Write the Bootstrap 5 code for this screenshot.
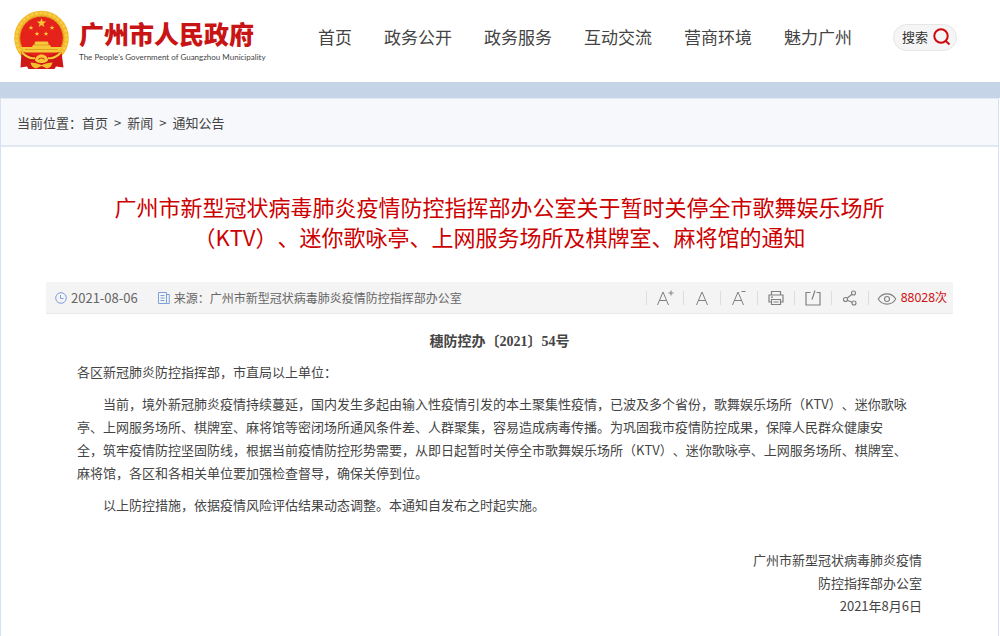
<!DOCTYPE html>
<html lang="zh-CN">
<head>
<meta charset="utf-8">
<meta name="viewport" content="width=device-width, initial-scale=1">
<title>广州市人民政府 - 通知公告</title>
<link href="https://cdn.jsdelivr.net/npm/bootstrap@5.3.0/dist/css/bootstrap.min.css" rel="stylesheet">
<style>
body{font-family:"Noto Sans CJK SC",sans-serif;font-size:13px;line-height:24px;color:#444;background:#fff;font-kerning:none;text-spacing-trim:space-all}
a{color:inherit;text-decoration:none}
a:hover{color:#c00}
.site-head{min-height:82px;padding:0 43px 8px 13px}
.site-name{font-size:25px;line-height:32px;font-weight:900;color:#c81414}
.site-sub{font:8px/12px Lato,sans-serif;color:#444;margin-top:2px}
.brand-link{width:305px;padding-top:6px}
.main-nav{gap:0 32px;font-size:17px;color:#444}
.main-nav .nav-link{padding:0;color:#444}
.search-btn{font-size:13px;line-height:20px;padding:2px 5px 3px 8px;background:#f5f5f5;border:1px solid #e6e6e6;color:#333;gap:5px}
.page-frame{border-top:16px solid #c6d4e8}
.page-body{border:1px solid #d5e1f1;border-top-color:#dfe8f3;border-bottom:0;margin-right:1px}
.crumb-bar{background:#f6f8fb;border-bottom:2px solid #e0e8f2;padding:12px 16px 10px}
.crumb-bar .breadcrumb{--bs-breadcrumb-divider:">";--bs-breadcrumb-item-padding-x:6px;--bs-breadcrumb-divider-color:#444;--bs-breadcrumb-margin-bottom:0;--bs-breadcrumb-font-size:13px}
.crumb-bar .active{color:#444}
.notice{padding:44px 45px 19px}
.notice h1{font-size:22px;line-height:30px;font-weight:400;color:#c00;margin-bottom:31px}
.info-bar{background:#f4f4f4;border-bottom:1px solid #e9e9e9;height:32px;padding:0 6px 0 9px;color:#666;font-size:12px}
.info-bar time{font-size:13px}
.tool{width:37px;height:14px;border:0;border-left:1px solid #ddd;background:none;padding:0;color:#808080}
.tool svg{display:block;margin:-1px auto 0}
.views{color:#d01010;font-family:"Noto Sans","Noto Sans CJK SC",sans-serif}
.notice-text{padding:0 31px;line-height:23px;color:#444}
.notice-text p{margin-bottom:9px}
.notice-text .long-text{text-indent:2em;padding-right:15px}
.notice-text .doc-no{font:bold 14px/23px "Liberation Serif","Noto Sans CJK SC",serif;margin-bottom:7px}
.sign-off{margin-top:32px}
</style>
</head>
<body>
<header class="site-head d-flex flex-wrap align-items-center">
  <a href="#" class="brand-link d-flex align-items-center">
    <svg width="58" height="60" viewBox="13 11 58 60" role="img" aria-label="国徽">
      <circle cx="41.5" cy="39" r="27.3" fill="#f1b92b"/>
      <circle cx="41.5" cy="39" r="25" fill="none" stroke="#f8cf45" stroke-width="2.4" stroke-dasharray="3 1.6"/>
      <circle cx="41.5" cy="39" r="21.8" fill="#e6231b" stroke="#d99b1e"/>
      <g fill="#f6c93a">
        <path d="M41.5 19.2l1.2 3.4h3.5l-2.8 2.1 1 3.4-2.9-2-2.9 2 1-3.4-2.8-2.1h3.5z"/>
        <path d="M31 26.2l.6 1.7h1.8l-1.4 1.1.5 1.8-1.5-1.1-1.5 1.1.5-1.8-1.4-1.1h1.800z"/>
        <path d="M52 26.2l.6 1.7h1.8l-1.4 1.1.5 1.8-1.5-1.1-1.5 1.1.5-1.8-1.4-1.1h1.800z"/>
        <path d="M37 32.2l.6 1.7h1.8l-1.4 1.1.5 1.8-1.5-1.1-1.5 1.1.5-1.8-1.4-1.1h1.800z"/>
        <path d="M46 32.2l.6 1.7h1.8l-1.4 1.1.5 1.8-1.5-1.1-1.5 1.1.5-1.8-1.4-1.1h1.800z"/>
        <path d="M34.500 44l1-1.500h12l1 1.500v2h1.500l1 2h11c-1 3-3 4.800-5 5.500H26c-2-.8-4-2.500-5-5.500h11l1-2h1.500z"/>
      </g>
      <path d="M33 46h17M25 50.500h33" stroke="#d98f1c" stroke-width=".7"/>
      <path d="M21.500 53c5 .2 9 2 13 4.500h14c4-2.500 8-4.300 13-4.500l2 15.500-7.500-1-1.500 2.500H28.500L27 67.500l-6.500 1z" fill="#cf1718"/>
      <path d="M22 53.500c5 5 9 6.500 13 5.500M61 53.500c-5 5-9 6.500-13 5.500" fill="none" stroke="#f6c93a" stroke-width="2.2"/>
      <path d="M35 61c0-3 3-5.500 6.500-5.500S48 58 48 61c0 1.500-3 3-6.500 3S35 62.500 35 61z" fill="#f6c93a"/>
      <path d="M38.500 60.500c1-2 5-2 6 0" fill="none" stroke="#d92a1a" stroke-width="1.2"/>
      <path d="M30.500 63.500c4 .2 7 1 11 2.500 4-1.500 7-2.300 11-2.500-.5 3.500-2.500 5-5.500 6l-5.500-2.500-5.500 2.500c-3-1-5-2.500-5.500-6z" fill="#f3bd2d"/>
    </svg>
    <span class="ms-2">
      <span class="site-name d-block text-nowrap">广州市人民政府</span>
      <span class="site-sub d-block text-nowrap">The People's Government of Guangzhou Municipality</span>
    </span>
  </a>
  <nav class="main-nav nav" aria-label="主导航">
    <a class="nav-link" href="#">首页</a>
    <a class="nav-link" href="#">政务公开</a>
    <a class="nav-link" href="#">政务服务</a>
    <a class="nav-link" href="#">互动交流</a>
    <a class="nav-link" href="#">营商环境</a>
    <a class="nav-link" href="#">魅力广州</a>
  </nav>
  <button type="button" class="search-btn rounded-pill d-flex align-items-center ms-auto">搜索
    <svg width="18" height="18" viewBox="0 0 18 18" fill="none" stroke="#d0080c" stroke-width="2"><circle cx="8" cy="8" r="6.7"/><path d="M12.2 12.5l4.300 4"/></svg>
  </button>
</header>

<div class="page-frame">
 <div class="page-body">
  <nav class="crumb-bar d-flex" aria-label="当前位置">
    <span>当前位置：</span>
    <ol class="breadcrumb">
      <li class="breadcrumb-item"><a href="#">首页</a></li>
      <li class="breadcrumb-item"><a href="#">新闻</a></li>
      <li class="breadcrumb-item active"><a href="#">通知公告</a></li>
    </ol>
  </nav>
  <main class="notice">
    <h1 class="text-center">广州市新型冠状病毒肺炎疫情防控指挥部办公室关于暂时关停全市歌舞娱乐场所<br>（KTV）、迷你歌咏亭、上网服务场所及棋牌室、麻将馆的通知</h1>
    <div class="info-bar d-flex align-items-center">
      <svg class="me-1" width="12" height="12" viewBox="0 0 12 12" fill="none" stroke="#7d9fdc"><circle cx="6" cy="6" r="5.3"/><path d="M5.500 3v3.500h3"/></svg>
      <time datetime="2021-08-06">2021-08-06</time>
      <svg class="ms-3 me-1 ps-1" width="16" height="12" viewBox="0 0 12 12" fill="none" stroke="#7d9fdc"><path d="M.5.500h8v11h-8zM8.500 2.500h2.800v9H8.500M2.500 3.500h4M2.500 6h4M2.500 8.500h4"/></svg>
      <span>来源：</span><span>广州市新型冠状病毒肺炎疫情防控指挥部办公室</span>
      <div class="d-flex align-items-center ms-auto">
        <button type="button" class="tool" aria-label="增大字号"><svg width="18" height="16" viewBox="0 0 18 16" fill="none" stroke="currentColor"><path d="M1.500 15L7 2l5.500 13M3.500 10.500h7M12.500 3h5M15 .5v5"/></svg></button>
        <button type="button" class="tool" aria-label="默认字号"><svg width="18" height="16" viewBox="0 0 18 16" fill="none" stroke="currentColor"><path d="M3.500 15L9 2l5.500 13M5.500 10.500h7"/></svg></button>
        <button type="button" class="tool" aria-label="减小字号"><svg width="18" height="16" viewBox="0 0 18 16" fill="none" stroke="currentColor"><path d="M2.500 15L8 2l5.500 13M4.500 10.500h7M11.500 1.500h4"/></svg></button>
        <button type="button" class="tool" aria-label="打印"><svg width="16" height="16" viewBox="0 0 16 16" fill="none" stroke="currentColor" stroke-width="1.200"><path d="M3.500 5V1.500h9V5M3.500 12H1V5h14v7h-2.500M3.500 9.500h9v5h-9zM5.500 12h5M3 7.200h2"/></svg></button>
        <button type="button" class="tool" aria-label="分享到"><svg width="16" height="16" viewBox="0 0 16 16" fill="none" stroke="currentColor" stroke-width="1.200"><path d="M5.500 2.500H1v12.500h14V2.500h-3.500M7 9.500L10 .5"/></svg></button>
        <button type="button" class="tool" aria-label="转发"><svg width="16" height="16" viewBox="0 0 16 16" fill="none" stroke="currentColor" stroke-width="1.100"><circle cx="11.500" cy="3" r="2"/><circle cx="3.500" cy="9.500" r="2"/><circle cx="12" cy="13" r="2"/><path d="M10 4.300L5 8.200M5.400 10.200l4.700 2"/></svg></button>
        <span class="tool d-flex w-auto ps-2 pe-1"><svg class="m-0" width="20" height="16" viewBox="0 0 19 16" fill="none" stroke="currentColor" stroke-width="1.100"><path d="M.7 8C5 1.200 14 1.200 18.300 8 14 14.800 5 14.800.7 8z"/><circle cx="9.500" cy="8" r="2.500"/></svg></span>
        <span class="views">88028次</span>
      </div>
    </div>
    <article class="notice-text">
      <p class="doc-no text-center mt-3">穗防控办〔2021〕54号</p>
      <p>各区新冠肺炎防控指挥部，市直局以上单位：</p>
      <p class="long-text">当前，境外新冠肺炎疫情持续蔓延，国内发生多起由输入性疫情引发的本土聚集性疫情，已波及多个省份，歌舞娱乐场所（KTV）、迷你歌咏亭、上网服务场所、棋牌室、麻将馆等密闭场所通风条件差、人群聚集，容易造成病毒传播。为巩固我市疫情防控成果，保障人民群众健康安全，筑牢疫情防控坚固防线，根据当前疫情防控形势需要，从即日起暂时关停全市歌舞娱乐场所（KTV）、迷你歌咏亭、上网服务场所、棋牌室、麻将馆，各区和各相关单位要加强检查督导，确保关停到位。</p>
      <p class="long-text">以上防控措施，依据疫情风险评估结果动态调整。本通知自发布之时起实施。</p>
      <div class="sign-off text-end">广州市新型冠状病毒肺炎疫情<br>防控指挥部办公室<br>2021年8月6日</div>
    </article>
  </main>
 </div>
</div>
<script src="https://cdn.jsdelivr.net/npm/bootstrap@5.3.0/dist/js/bootstrap.bundle.min.js"></script>
</body>
</html>
